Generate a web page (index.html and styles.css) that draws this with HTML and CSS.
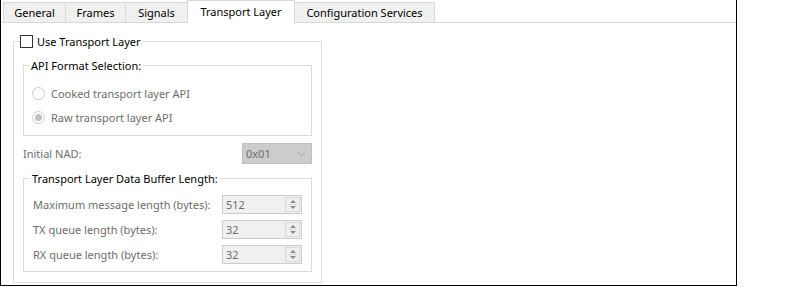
FILE: index.html
```html
<!DOCTYPE html>
<html>
<head>
<meta charset="utf-8">
<link rel="stylesheet" href="styles.css">
</head>
<body>
<div class="window">
  <div class="tabs">
    <div class="tab tab-general">General</div>
    <div class="tab tab-frames">Frames</div>
    <div class="tab tab-signals">Signals</div>
    <div class="tab tab-transport active">Transport Layer</div>
    <div class="tab tab-config">Configuration Services</div>
  </div>
  <div class="panel">
    <fieldset class="group outer">
      <legend class="legend"><span class="checkbox"></span>Use Transport Layer</legend>
      <fieldset class="group api">
        <legend class="legend">API Format Selection:</legend>
        <div class="radio-row"><span class="radio"></span>Cooked transport layer API</div>
        <div class="radio-row second"><span class="radio checked"></span>Raw transport layer API</div>
      </fieldset>
      <div class="nad-row">
        <span class="label">Initial NAD:</span>
        <div class="combo"><span>0x01</span>
          <svg class="chev" width="9" height="5" viewBox="0 0 9 5"><path d="M0.5 0.5 L4.5 4.5 L8.5 0.5" fill="none" stroke="#a6a6a6" stroke-width="1"/></svg>
        </div>
      </div>
      <fieldset class="group buffer">
        <legend class="legend">Transport Layer Data Buffer Length:</legend>
        <div class="spin-row">
          <span class="label">Maximum message length (bytes):</span>
          <div class="spin"><span class="val">512</span><span class="arrows"><span class="up"></span><span class="down"></span></span></div>
        </div>
        <div class="spin-row">
          <span class="label">TX queue length (bytes):</span>
          <div class="spin"><span class="val">32</span><span class="arrows"><span class="up"></span><span class="down"></span></span></div>
        </div>
        <div class="spin-row">
          <span class="label">RX queue length (bytes):</span>
          <div class="spin"><span class="val">32</span><span class="arrows"><span class="up"></span><span class="down"></span></span></div>
        </div>
      </fieldset>
    </fieldset>
  </div>
</div>
</body>
</html>
```
FILE: styles.css
```css
html, body {
  margin: 0;
  padding: 0;
  background: #fff;
}
body {
  font-family: "Noto Sans", "Open Sans", sans-serif;
  font-size: 11px;
  color: #000;
}
.window {
  box-sizing: border-box;
  width: 737px;
  height: 286px;
  border: 1px solid #000;
  border-top: none;
  padding: 0 0 0 1px;
}
.tabs {
  display: flex;
  align-items: flex-end;
  height: 22px;
  border-bottom: 1px solid #d9d9d9;
  padding-left: 1px;
}
.tab {
  box-sizing: border-box;
  height: 20px;
  background: #f0f0f0;
  border: 1px solid #d9d9d9;
  border-bottom: none;
  margin-right: -1px;
  text-align: center;
  line-height: 19px;
  white-space: nowrap;
}
.tab-general { width: 63px; }
.tab-frames { width: 61px; }
.tab-signals { width: 63px; }
.tab-transport { width: 108px; }
.tab-config { width: 141px; }
.tab.active {
  height: 23px;
  background: #fff;
  margin-bottom: -1px;
  position: relative;
  z-index: 1;
  line-height: 22px;
}
.panel {
  padding: 10px 0 0 11px;
}
.group {
  margin: 0;
  border: 1px solid #dcdcdc;
  min-width: 0;
}
.legend {
  height: 17px;
  line-height: 17px;
  padding: 0 2px 0 2px;
  margin-left: -3px;
  display: flex;
  align-items: center;
  white-space: nowrap;
}
.outer {
  box-sizing: border-box;
  width: 309px;
  height: 250px;
  padding: 0 9px 0 9px;
}
.outer > .legend {
  margin-left: -3px;
  padding-left: 0;
}
.checkbox {
  box-sizing: border-box;
  width: 13px;
  height: 13px;
  border: 1px solid #333;
  background: #fff;
  margin-right: 4px;
}
.api {
  margin-top: 7px;
  padding: 9px 9px 8px 8px;
}
.radio-row {
  height: 20px;
  display: flex;
  align-items: center;
  color: #6d6d6d;
  white-space: nowrap;
}
.radio-row.second {
  margin-top: 4px;
}
.radio {
  box-sizing: border-box;
  width: 13px;
  height: 13px;
  border: 1px solid #cccccc;
  border-radius: 50%;
  background: #fff;
  margin-right: 6px;
  display: flex;
  align-items: center;
  justify-content: center;
}
.radio.checked::after {
  content: "";
  width: 7px;
  height: 7px;
  border-radius: 50%;
  background: #c0c0c0;
}
.nad-row {
  margin-top: 7px;
  height: 21px;
  display: flex;
  align-items: center;
  justify-content: space-between;
  color: #6d6d6d;
}
.combo {
  box-sizing: border-box;
  width: 70px;
  height: 21px;
  background: #cccccc;
  border: 1px solid #bfbfbf;
  display: flex;
  align-items: center;
  justify-content: space-between;
  padding: 0 5px 0 3px;
  color: #6d6d6d;
}
.buffer {
  margin-top: 6px;
  padding: 8px 9px 7px 9px;
}
.spin-row {
  height: 19px;
  display: flex;
  align-items: center;
  justify-content: space-between;
  color: #6d6d6d;
  white-space: nowrap;
}
.spin-row + .spin-row {
  margin-top: 6px;
}
.spin {
  box-sizing: border-box;
  width: 80px;
  height: 19px;
  background: #f0f0f0;
  border: 1px solid #cccccc;
  display: flex;
  align-items: center;
  justify-content: space-between;
  padding: 1px 1px 1px 3px;
}
.arrows {
  box-sizing: border-box;
  width: 15px;
  height: 15px;
  border: 1px solid #d9d9d9;
  display: flex;
  flex-direction: column;
  align-items: center;
  justify-content: space-between;
  padding: 2px 0;
  position: relative;
}
.arrows::after {
  content: "";
  position: absolute;
  left: 1px;
  right: 1px;
  top: 6px;
  height: 1px;
  background: #d9d9d9;
}
.up {
  width: 0;
  height: 0;
  border-left: 3px solid transparent;
  border-right: 3px solid transparent;
  border-bottom: 3px solid #8a8a8a;
}
.down {
  width: 0;
  height: 0;
  border-left: 3px solid transparent;
  border-right: 3px solid transparent;
  border-top: 3px solid #8a8a8a;
}
```
